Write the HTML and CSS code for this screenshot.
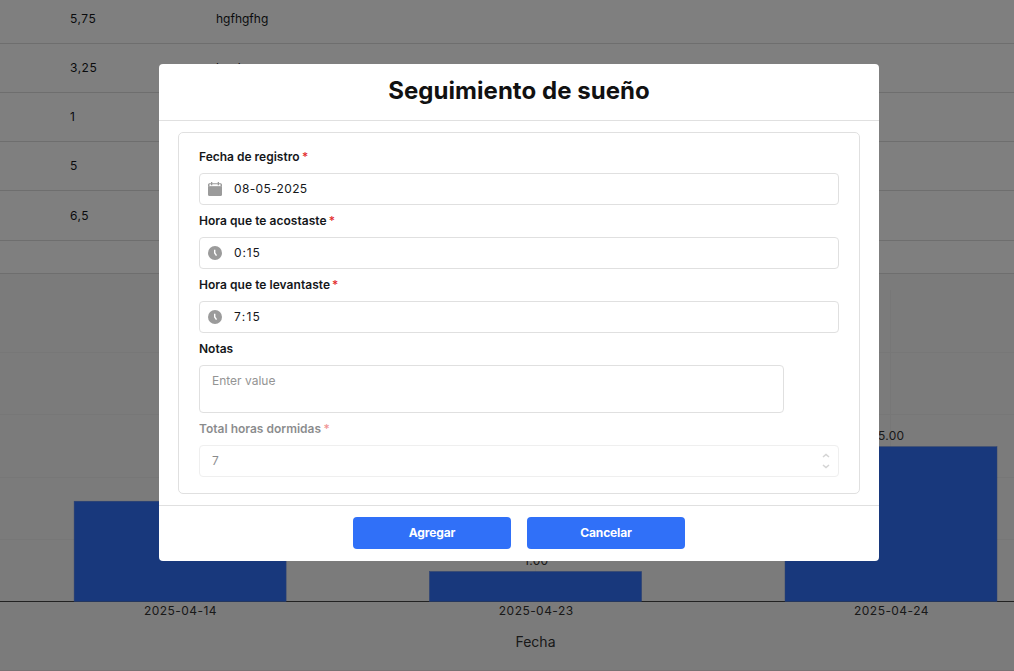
FILE: index.html
```html
<!DOCTYPE html>
<html lang="es">
<head>
<meta charset="utf-8">
<title>Seguimiento de sueño</title>
<link rel="stylesheet" href="styles.css">
</head>
<body>
<main class="page">
  <div class="table">
    <div class="row"><span class="cell hours">5,75</span><span class="cell">hgfhgfhg</span></div>
    <div class="row"><span class="cell hours">3,25</span><span class="cell">hggh</span></div>
    <div class="row"><span class="cell hours">1</span></div>
    <div class="row"><span class="cell hours">5</span></div>
    <div class="row tall"><span class="cell hours">6,5</span></div>
    <div class="row foot"></div>
  </div>
  <svg class="chart" width="1014" height="397" viewBox="0 274 1014 397">
    <g class="grid">
      <path d="M0 352.5H1014M0 414.5H1014M0 477.5H1014M0 539.5H1014M180.5 290V601M535.5 290V601M890.5 290V601"/>
    </g>
    <path class="axis" d="M0 601.5H1014"/>
    <g class="bars">
      <rect x="74.100" y="501.200" width="212" height="100.300"/>
      <rect x="429.400" y="571.500" width="212.200" height="30"/>
      <rect x="785" y="446.700" width="212" height="154.800"/>
    </g>
    <g class="ticks">
      <text x="536.200" y="565">1.00</text>
      <text x="891.200" y="440">5.00</text>
      <text class="date" x="180.500" y="615">2025-04-14</text>
      <text class="date" x="536.200" y="615">2025-04-23</text>
      <text class="date" x="891.500" y="615">2025-04-24</text>
    </g>
    <text class="axis-title" x="535.500" y="647">Fecha</text>
    <path class="page-end" d="M0 670.5H1014"/>
  </svg>
</main>
<div class="overlay">
  <section class="modal" role="dialog">
    <header class="modal-head"><h1>Seguimiento de sueño</h1></header>
    <div class="modal-body">
      <form class="form">
        <label class="label">Fecha de registro<b class="req">*</b></label>
        <div class="input">
          <svg class="icon" width="14" height="14" viewBox="0 0 14 14"><path d="M3 0h1.3v1.2h5.4V0H11v1.2h1.3C13.300 1.200 14 1.900 14 2.800V4.600H0V2.800C0 1.900.7 1.200 1.700 1.200H3z"/><path class="slot" d="M1.500 2.200H3V3.200H4.300V2.200H9.700V3.200H11V2.200H12.500V4.200H1.500z"/><path d="M0 4.200H14V12.500Q14 14 12.500 14H1.500Q0 14 0 12.500z"/></svg>
          <span>08-05-2025</span>
        </div>
        <label class="label wide">Hora que te acostaste<b class="req">*</b></label>
        <div class="input">
          <svg class="icon" width="14" height="14" viewBox="0 0 14 14"><circle cx="7" cy="7" r="7"/><path class="hand" d="M6.700 3.800V7L8.500 9.600"/></svg>
          <span class="time">0:15</span>
        </div>
        <label class="label wide">Hora que te levantaste<b class="req">*</b></label>
        <div class="input">
          <svg class="icon" width="14" height="14" viewBox="0 0 14 14"><circle cx="7" cy="7" r="7"/><path class="hand" d="M6.700 3.800V7L8.500 9.600"/></svg>
          <span class="time later">7:15</span>
        </div>
        <label class="label">Notas</label>
        <div class="input notes">Enter value</div>
        <div class="disabled">
          <label class="label">Total horas dormidas<b class="req">*</b></label>
          <div class="input number">
            <span>7</span>
            <svg class="stepper" width="8" height="16" viewBox="0 0 8 16"><path d="M1 4 4 1.500 7 4M1 12 4 14.500 7 12"/></svg>
          </div>
        </div>
      </form>
    </div>
    <footer class="modal-foot">
      <button class="btn">Agregar</button>
      <button class="btn">Cancelar</button>
    </footer>
  </section>
</div>
</body>
</html>
```

FILE: styles.css
```css
* { box-sizing: border-box; }
body {
  margin: 0;
  height: 671px;
  overflow: hidden;
  background: #f7f7f7;
  color: #15171a;
  font: 12px/20px Inter, "Liberation Sans", sans-serif;
}
.table { background: #fff; }
.row {
  display: flex;
  align-items: center;
  height: 49px;
  padding-left: 70px;
  border-bottom: 1px solid #dcdcdc;
}
.row:first-child { height: 44px; padding-bottom: 5px; }
.row.tall { height: 50px; }
.row.foot { height: 33px; }
.hours { width: 146px; letter-spacing: 0.5px; }
.chart { display: block; }
.grid path { fill: none; stroke: #eee; }
.axis { stroke: #444; }
.bars rect { fill: #3070f8; stroke: #5c82dc; stroke-width: 0.5; }
.ticks text { font-size: 12px; text-anchor: middle; fill: #333; letter-spacing: 0.3px; }
.ticks .date { letter-spacing: 0.45px; }
.axis-title { font-size: 14px; text-anchor: middle; fill: #333; }
.page-end { stroke: #f0e4e8; }
.overlay {
  position: absolute;
  inset: 0;
  padding: 64px 0 0 159px;
  background: rgba(0, 0, 0, 0.5);
}
.modal {
  width: 720px;
  height: 497px;
  border-radius: 4px;
  background: #fff;
  overflow: hidden;
}
.modal-head {
  height: 57px;
  border-bottom: 1px solid #e0e0e0;
  text-align: center;
}
h1 {
  margin: 0;
  padding-top: 11px;
  font-size: 24px;
  line-height: 32px;
  font-weight: 650;
  letter-spacing: 0.05px;
  color: #111;
}
.modal-body { height: 384px; padding: 11px 19px; }
.form {
  height: 362px;
  padding: 8px 20px 16px;
  border: 1px solid #e0e0e0;
  border-radius: 5px;
}
.label {
  display: block;
  height: 32px;
  line-height: 32px;
  font-size: 12px;
  font-weight: 600;
}
.label.wide { letter-spacing: 0.04px; }
.req { margin-left: 2.5px; color: #e32c2c; font-weight: 500; }
.wide .req { margin-left: 2px; }
.input {
  display: flex;
  align-items: center;
  height: 32px;
  padding-left: 8px;
  border: 1px solid #e0e0e0;
  border-radius: 4px;
  letter-spacing: 0.35px;
}
.time { letter-spacing: 0.9px; }
.time.later { letter-spacing: 1.3px; }
.icon { margin-right: 12px; fill: #9b9b9b; }
.slot { fill: #fff; }
.hand { fill: none; stroke: #fff; stroke-width: 1.4; }
.notes {
  align-items: flex-start;
  width: 585px;
  height: 48px;
  padding: 5px 12px;
  color: #949494;
  letter-spacing: 0;
}
.disabled { opacity: 0.5; }
.number { justify-content: space-between; padding: 0 8px 0 12px; }
.stepper { fill: none; stroke: #aaa; stroke-width: 1.5; }
.modal-foot {
  display: flex;
  justify-content: center;
  gap: 16px;
  height: 56px;
  padding-top: 11px;
  border-top: 1px solid #e0e0e0;
}
.btn {
  width: 158px;
  height: 32px;
  padding: 0 0 1px;
  border: 0;
  border-radius: 4px;
  background: #3070f8;
  color: #fff;
  font: 700 12px/30px Inter, sans-serif;
  letter-spacing: -0.15px;
}
```
